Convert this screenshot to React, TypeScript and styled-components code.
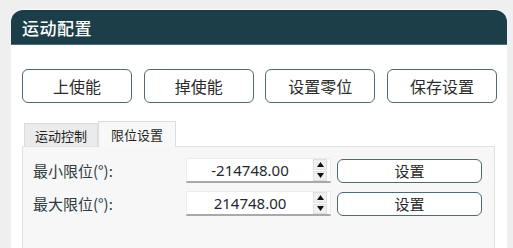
import React, {FC} from "react"
import styled, {createGlobalStyle} from "styled-components";

const GlobalStyle = createGlobalStyle`
    html, body {
        margin: 0;
        padding: 0;
        background: #efefef;
        font-family: "Noto Sans", "Noto Sans CJK SC", sans-serif;
    }
`;

const Page = styled.div`
    padding: 10px 6px 0 11px;
    height: 248px;
    box-sizing: border-box;
    overflow: hidden;
`;

const Panel = styled.div`
    background: #ffffff;
    border-radius: 12px 12px 0 0;
    height: 238px;
    overflow: hidden;
    box-shadow: 0 -1px 0 #f8f8f8;
`;

const Header = styled.div`
    height: 34px;
    background: #1c3e49;
    border-bottom: 1px solid #4c6f7a;
    display: flex;
    align-items: center;
    padding-left: 11px;
    color: #ffffff;
    font-family: "Noto Sans CJK SC", sans-serif;
    font-size: 17px;
    font-weight: 500;
    letter-spacing: 0.5px;
`;

const Body = styled.div`
    padding: 24px 10px 0 11px;
`;

const ActionRow = styled.div`
    display: flex;
    justify-content: space-between;
    width: 475px;
`;

const ActionButton = styled.button`
    width: 110px;
    height: 34px;
    background: #ffffff;
    border: 1.5px solid #4f6a73;
    border-radius: 6px;
    font-family: "Noto Sans CJK SC", sans-serif;
    font-size: 16px;
    color: #2b2b2b;
    padding: 0;
`;

const TabWidget = styled.div`
    margin-top: 17px;
    width: 473px;
`;

const TabBar = styled.div`
    display: flex;
    align-items: flex-end;
    padding-left: 2px;
    height: 26px;
`;

const Tab = styled.div<{ $active?: boolean }>`
    display: flex;
    align-items: center;
    justify-content: center;
    box-sizing: border-box;
    height: ${p => p.$active ? 26 : 23}px;
    width: ${p => p.$active ? 78 : 74}px;
    background: ${p => p.$active ? "#f8f8f8" : "#ebebeb"};
    border: 1px solid #dcdcdc;
    border-bottom: none;
    font-family: "Noto Sans CJK SC", sans-serif;
    font-size: 13px;
    color: #1e1e1e;
    margin-bottom: ${p => p.$active ? -1 : 0}px;
    position: relative;
    z-index: ${p => p.$active ? 1 : 0};
`;

const Pane = styled.div`
    background: #f7f7f7;
    border: 1px solid #e2e2e2;
    height: 110px;
    padding: 11px 0 0 10px;
    display: flex;
    flex-direction: column;
    gap: 8px;
`;

const FieldRow = styled.div`
    display: grid;
    grid-template-columns: 147px 145px 145px;
    column-gap: 6px;
    align-items: center;
    height: 25px;
`;

const Label = styled.span`
    font-family: "Noto Sans CJK SC", sans-serif;
    font-size: 15px;
    color: #2f3a40;
`;

const SpinBox = styled.div`
    display: flex;
    align-items: stretch;
    height: 25px;
    box-sizing: border-box;
    background: #ffffff;
    border: 1px solid #ececec;
    border-bottom: 2px solid #a9a9a9;
`;

const SpinValue = styled.div`
    flex: 1;
    display: flex;
    align-items: center;
    justify-content: center;
    font-family: "Noto Sans", sans-serif;
    font-size: 15px;
    color: #1f2a30;
`;

const SpinButtons = styled.div`
    width: 14px;
    margin: 0 3px 0 0;
    display: flex;
    flex-direction: column;
    gap: 1px;
`;

const SpinArrow = styled.div`
    flex: 1;
    background: #f0f0f0;
    border: 1px solid #e0e0e0;
    display: flex;
    align-items: center;
    justify-content: center;
`;

const SetButton = styled.button`
    height: 24px;
    background: #ffffff;
    border: 1.5px solid #4f6a73;
    border-radius: 6px;
    font-family: "Noto Sans CJK SC", sans-serif;
    font-size: 15px;
    color: #2b2b2b;
    padding: 0;
`;

const Arrow: FC<{ up?: boolean }> = ({up}) => (
    <svg width="7" height="5" viewBox="0 0 7 5">
        <path d={up ? "M3.5 0 L7 5 L0 5 Z" : "M0 0 L7 0 L3.5 5 Z"} fill="#111" />
    </svg>
)

const Field: FC<{ label: string, value: string }> = ({label, value}) => (
    <FieldRow>
        <Label>{label}</Label>
        <SpinBox>
            <SpinValue>{value}</SpinValue>
            <SpinButtons>
                <SpinArrow><Arrow up /></SpinArrow>
                <SpinArrow><Arrow /></SpinArrow>
            </SpinButtons>
        </SpinBox>
        <SetButton>设置</SetButton>
    </FieldRow>
)

export default function App() {
    return (
        <>
            <GlobalStyle />
            <Page>
                <Panel>
                    <Header>运动配置</Header>
                    <Body>
                        <ActionRow>
                            <ActionButton>上使能</ActionButton>
                            <ActionButton>掉使能</ActionButton>
                            <ActionButton>设置零位</ActionButton>
                            <ActionButton>保存设置</ActionButton>
                        </ActionRow>
                        <TabWidget>
                            <TabBar>
                                <Tab>运动控制</Tab>
                                <Tab $active>限位设置</Tab>
                            </TabBar>
                            <Pane>
                                <Field label="最小限位(°):" value="-214748.00" />
                                <Field label="最大限位(°):" value="214748.00" />
                            </Pane>
                        </TabWidget>
                    </Body>
                </Panel>
            </Page>
        </>
    );
}
